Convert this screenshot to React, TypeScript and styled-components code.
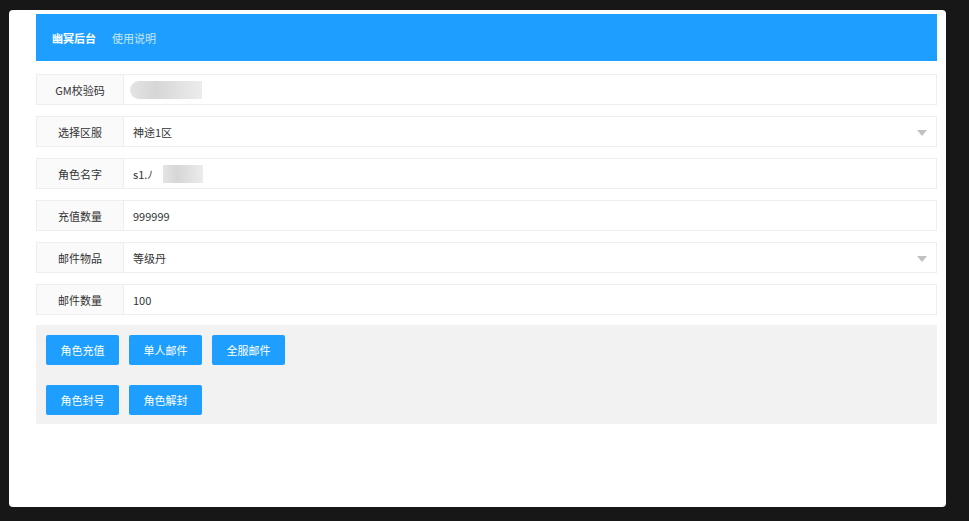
import styled, { createGlobalStyle } from 'styled-components'

const GlobalStyle = createGlobalStyle`
  html, body {
    margin: 0;
    background: #171717;
    font-family: "Noto Sans CJK SC", "Noto Sans", "Liberation Sans", sans-serif;
    font-size: 11px;
    color: #333;
  }
`

const Page = styled.div`
  width: 969px;
  height: 521px;
  padding: 10px 23px 14px 9px;
  box-sizing: border-box;
`

const Panel = styled.div`
  background: #fff;
  border-radius: 4px;
  height: 497px;
  padding: 4px 9px 0 27px;
  box-sizing: border-box;
`

const Header = styled.div`
  height: 47px;
  background: #1e9fff;
  display: flex;
  align-items: center;
  padding-left: 16px;
  gap: 16px;
  color: #fff;
`

const Brand = styled.span`
  font-weight: 700;
  font-size: 11px;
`

const NavLink = styled.a`
  color: rgba(255, 255, 255, 0.75);
  font-size: 11px;
  text-decoration: none;
`

const Form = styled.div`
  display: flex;
  flex-direction: column;
  gap: 11px;
  margin-top: 13px;
`

const Row = styled.div`
  display: flex;
  height: 31px;
  box-sizing: border-box;
  border: 1px solid #eee;
  position: relative;
`

const Label = styled.div`
  width: 86px;
  flex: none;
  background: #fafafa;
  border-right: 1px solid #eee;
  display: flex;
  align-items: center;
  justify-content: center;
  color: #333;
`

const Field = styled.div`
  flex: 1;
  display: flex;
  align-items: center;
  padding-left: 9px;
  color: #333;
`

const Arrow = styled.span`
  position: absolute;
  right: 9px;
  top: 13px;
  width: 0;
  height: 0;
  border-left: 5px solid transparent;
  border-right: 5px solid transparent;
  border-top: 6px solid #c2c2c2;
`

const Blur = styled.span<{ $w: number; $round?: boolean }>`
  display: inline-block;
  width: ${(p) => p.$w}px;
  height: 18px;
  background: linear-gradient(90deg, #e4e4e4 0%, #d6d6d6 35%, #e2e2e2 70%, #ececec 100%);
  border-radius: ${(p) => (p.$round ? '9px 0 0 9px' : '0')};
  filter: blur(0.6px);
`

const Actions = styled.div`
  margin-top: 10px;
  background: #f2f2f2;
  padding: 10px 10px 9px;
  display: flex;
  flex-direction: column;
  gap: 20px;
`

const BtnRow = styled.div`
  display: flex;
  gap: 10px;
`

const Button = styled.button`
  width: 73px;
  height: 30px;
  border: none;
  border-radius: 2px;
  background: #1e9fff;
  color: #fff;
  font-family: inherit;
  font-size: 11px;
  cursor: pointer;
  padding: 0;
`

const rows: { label: string; value?: string; select?: boolean; blur?: 'key' | 'name' }[] = [
  { label: 'GM校验码', blur: 'key' },
  { label: '选择区服', value: '神途1区', select: true },
  { label: '角色名字', value: 's1.ﾉ', blur: 'name' },
  { label: '充值数量', value: '999999' },
  { label: '邮件物品', value: '等级丹', select: true },
  { label: '邮件数量', value: '100' },
]

export default function App() {
  return (
    <>
      <GlobalStyle />
      <Page>
        <Panel>
          <Header>
            <Brand>幽冥后台</Brand>
            <NavLink>使用说明</NavLink>
          </Header>
          <Form>
            {rows.map((r) => (
              <Row key={r.label}>
                <Label>{r.label}</Label>
                <Field>
                  {r.blur === 'key' && <Blur $w={72} $round style={{ marginLeft: -3 }} />}
                  {r.value}
                  {r.blur === 'name' && <Blur $w={40} style={{ marginLeft: 10 }} />}
                </Field>
                {r.select && <Arrow />}
              </Row>
            ))}
          </Form>
          <Actions>
            <BtnRow>
              <Button>角色充值</Button>
              <Button>单人邮件</Button>
              <Button>全服邮件</Button>
            </BtnRow>
            <BtnRow>
              <Button>角色封号</Button>
              <Button>角色解封</Button>
            </BtnRow>
          </Actions>
        </Panel>
      </Page>
    </>
  )
}
